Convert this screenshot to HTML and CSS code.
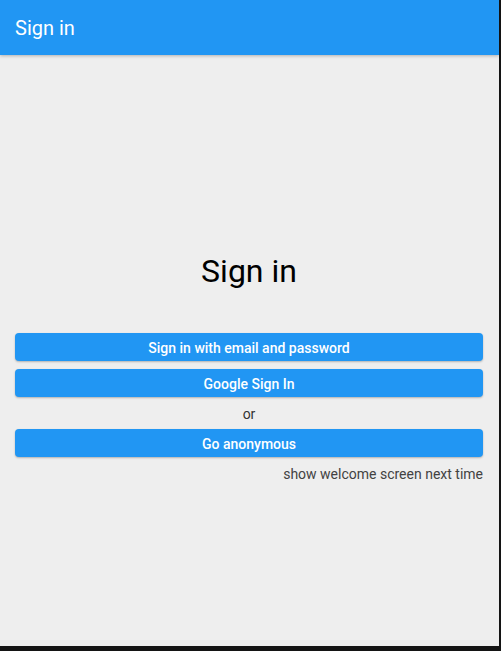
FILE: index.html
```html
<!DOCTYPE html>
<html>
<head>
<meta charset="utf-8">
<link rel="stylesheet" href="styles.css">
</head>
<body>
<div class="frame">
  <header class="appbar"><span class="appbar-title">Sign in</span></header>
  <main class="content">
    <h1 class="heading">Sign in</h1>
    <div class="actions">
      <button class="btn">Sign in with email and password</button>
      <button class="btn">Google Sign In</button>
      <div class="or">or</div>
      <button class="btn">Go anonymous</button>
      <div class="welcome">show welcome screen next time</div>
    </div>
  </main>
</div>
</body>
</html>
```
FILE: styles.css
```css
html, body {
  margin: 0;
  padding: 0;
  background: #141414;
  width: 501px;
  height: 651px;
  overflow: hidden;
}
body {
  font-family: Roboto, "Liberation Sans", sans-serif;
}
.frame {
  width: 499px;
  height: 646px;
  background: #eeeeee;
  display: flex;
  flex-direction: column;
}
.appbar {
  height: 55px;
  flex: none;
  background: #2196f3;
  color: #fff;
  display: flex;
  align-items: center;
  padding-left: 15px;
  box-shadow: 0 1px 3px rgba(0,0,0,0.25);
  position: relative;
  z-index: 1;
}
.appbar-title {
  font-size: 20px;
  font-weight: 400;
  line-height: 24px;
  padding-top: 1px;
}
.content {
  flex: 1;
  padding: 196px 16px 0 15px;
}
.heading {
  margin: 0;
  font-size: 32px;
  font-weight: 400;
  line-height: 40px;
  text-align: center;
  color: #000;
}
.actions {
  margin-top: 42px;
  display: flex;
  flex-direction: column;
}
.btn {
  height: 28px;
  border: none;
  border-radius: 4px;
  background: #2196f3;
  color: #fff;
  font-family: Roboto, "Liberation Sans", sans-serif;
  font-size: 14px;
  font-weight: 500;
  padding: 2px 0 0;
  box-shadow: 0 1px 2px rgba(0,0,0,0.25);
}
.btn + .btn {
  margin-top: 8px;
}
.or {
  height: 32px;
  line-height: 32px;
  padding-top: 1px;
  box-sizing: border-box;
  text-align: center;
  font-size: 14px;
  color: #333;
}
.welcome {
  margin-top: 7px;
  line-height: 20px;
  text-align: right;
  font-size: 14px;
  color: #424242;
}
```
